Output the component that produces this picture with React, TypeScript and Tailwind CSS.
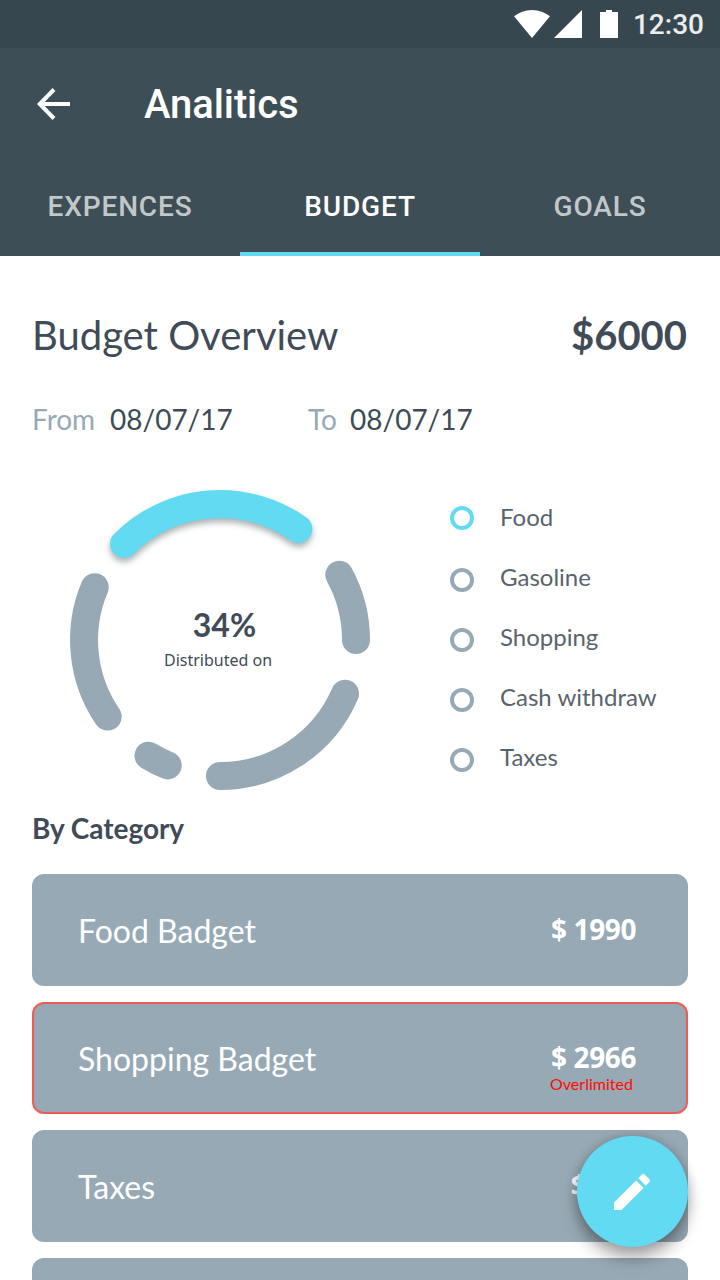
const arcs = [
  'M339.3 574.7A136 136 0 0 1 356 640',
  'M345 693.7A136 136 0 0 1 220 776',
  'M167.7 765.4A136 136 0 0 1 148.5 755.7',
  'M107.7 716.6A136 136 0 0 1 94.7 587.2',
];

const legend = ['Food', 'Gasoline', 'Shopping', 'Cash withdraw', 'Taxes'];

function StatusBar() {
  return (
    <div className="flex h-12 items-center justify-end bg-[#37474f] pr-4">
      <svg className="h-12 w-[106px]" viewBox="514 0 106 48" fill="#fff">
        <path d="M514 16.2C519 12.4 525 10 532 10s13 2.4 18 6.2L532 38z" />
        <path d="M582 10v28h-28z" />
        <path d="M600 12h6v-2h6v2h6v26h-18z" />
      </svg>
      <span className="ml-[13px] pt-0.5 font-['Roboto'] text-[28px] leading-8 font-medium text-white/90">12:30</span>
    </div>
  );
}

function Tab({ label, active = false }: { label: string; active?: boolean }) {
  return (
    <button
      className={`flex h-24 w-60 items-center justify-center border-b-4 pt-0.5 font-['Roboto'] text-[28px] leading-8 font-medium tracking-[0.85px] ${
        active ? 'border-[#62daf2] text-white' : 'border-transparent text-white/70'
      }`}
    >
      {label}
    </button>
  );
}

function Card({ name, amount, over = false }: { name: string; amount: string; over?: boolean }) {
  return (
    <div
      className={`flex h-28 shrink-0 items-start justify-between rounded-[12px] border-2 bg-[#97a9b4] pl-11 text-white ${
        over ? 'border-[#f05b54]' : 'border-[#97a9b4]'
      } ${amount.length < 6 ? 'pr-[46px]' : 'pr-[50px]'}`}
    >
      <span className="pt-[35px] text-[32px] leading-10">{name}</span>
      <div className="flex flex-col pt-[38px]">
        <span className="font-['Open_Sans'] text-[28px] leading-[30px] font-bold tracking-[-0.4px]">{amount}</span>
        {over && <span className="mt-0.5 -ml-px text-[16px] leading-5 text-[#ff0c00]">Overlimited</span>}
      </div>
    </div>
  );
}

export default function App() {
  return (
    <div className="relative flex h-[1280px] w-[720px] flex-col overflow-hidden bg-white font-['Lato',sans-serif] text-[#404b57]">
      <StatusBar />
      <header className="flex h-[208px] flex-col bg-[#3e4e56]">
        <div className="flex h-28 items-center pl-[37px]">
          <svg className="h-8 w-[33px]" viewBox="0 0 33 32" fill="none" stroke="#fff" strokeWidth="4">
            <path d="M17 1.5 2.8 16 17 30.5M3 16h30" />
          </svg>
          <h1 className="ml-[74px] pt-0.5 font-['Roboto'] text-[40px] leading-[48px] font-medium tracking-[-0.1px] text-white">Analitics</h1>
        </div>
        <nav className="flex">
          <Tab label="EXPENCES" />
          <Tab label="BUDGET" active />
          <Tab label="GOALS" />
        </nav>
      </header>

      <main className="flex flex-1 flex-col px-8 pt-[55px]">
        <div className="flex h-12 items-center justify-between">
          <h2 className="text-[40px] leading-[48px]">Budget Overview</h2>
          <span className="mr-px text-[40px] leading-[48px] font-bold">$6000</span>
        </div>
        <div className="mt-9 flex h-12 items-center text-[28px]">
          <span className="w-[78px] text-[#97a9b4]">From</span>
          <span className="w-[198px]">08/07/17</span>
          <span className="w-[42px] text-[#97a9b4]">To</span>
          <span>08/07/17</span>
        </div>

        <section className="mt-[27px] flex h-[340px]">
          <div className="relative w-[376px]">
            <svg className="h-[340px] w-[376px]" viewBox="32 470 376 340" fill="none" strokeWidth="28" strokeLinecap="round">
              {arcs.map((d) => (
                <path key={d} d={d} stroke="#97a9b4" />
              ))}
              <path
                className="drop-shadow-[0_4px_3px_rgba(40,60,65,0.4)]"
                d="M124 543.8A136 136 0 0 1 298.4 528.9"
                stroke="#62daf2"
              />
            </svg>
            <div className="absolute inset-x-0 top-[135px] flex flex-col items-center pr-[4px]">
              <span className="pl-[13px] text-[32px] leading-10 font-bold">34%</span>
              <span className="mt-[3px] font-['Noto_Sans'] text-[16px] leading-6">Distributed on</span>
            </div>
          </div>
          <ul className="flex flex-col pt-[18px] pl-[42px]">
            {legend.map((item, i) => (
              <li key={item} className="flex h-[60px] items-center text-[24px] leading-[30px] text-[#59636d]">
                <span
                  className={`mr-[26px] size-6 rounded-full border-4 ${
                    i === 0 ? 'border-[#62daf2]' : 'mt-1 border-[#97a9b4]'
                  }`}
                />
                <span className="-mt-0.5">{item}</span>
              </li>
            ))}
          </ul>
        </section>

        <h3 className="-mt-px h-[65px] text-[28px] leading-[38px] font-bold tracking-[-0.05px]">By Category</h3>
        <div className="flex flex-col gap-4">
          <Card name="Food Badget" amount="$ 1990" />
          <Card name="Shopping Badget" amount="$ 2966" over />
          <Card name="Taxes" amount="$ 310" />
          <div className="h-28 shrink-0 rounded-[12px] bg-[#97a9b4]" />
        </div>
      </main>

      <button className="absolute top-[1136px] left-[576.5px] flex size-[111px] items-center justify-center rounded-full bg-[#62daf2] shadow-[0_12px_16px_rgba(0,0,0,0.3),0_0_12px_rgba(0,0,0,0.2)]">
        <svg className="size-12" viewBox="0 0 24 24" fill="#fff">
          <path d="M3 17.25V21h3.75L17.81 9.94l-3.75-3.75L3 17.25zM20.71 7.04a.996.996 0 0 0 0-1.41l-2.34-2.34a.996.996 0 0 0-1.41 0l-1.83 1.83 3.75 3.75 1.83-1.83z" />
        </svg>
      </button>
    </div>
  );
}
